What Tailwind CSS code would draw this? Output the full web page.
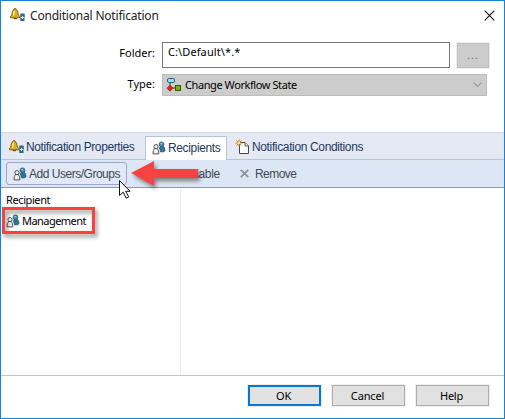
<!DOCTYPE html>
<html lang="en">
<head>
<meta charset="utf-8">
<title>Conditional Notification</title>
<script src="https://cdn.jsdelivr.net/npm/@tailwindcss/browser@4"></script>
</head>
<body class="bg-white">
<svg class="hidden">
  <defs>
    <symbol id="bell" viewBox="0 0 16 16">
      <path d="M5 1.500c.8 0 1.100.4 1.100 1.100C7.600 3.200 7.900 4.800 8.100 6.800c.1 1.200.8 1.900 1.500 2.700v1.300H.5V9.500C1.300 8.700 1.800 8 2 6.800c.2-1.900.5-3.600 1.900-4.200 0-.7.3-1.100 1.100-1.100z" fill="#dcae1e" stroke="#6e5413" stroke-width=".9"/>
      <path d="M4.300 3.800 3.500 8.500" stroke="#fff3a0" stroke-width="1.300"/>
      <path d="M3.800 11h3v1.200h-3z" fill="#6b4b12"/>
      <path d="M10.500 6.500h4v3.500h-4zM10.500 10v4h4" fill="#285a78"/>
      <path d="M10.500 7h4v7h-4z" fill="#346983"/>
      <path d="M11 10.500h3M12.500 9v3" stroke="#dce9ef" stroke-width="1"/>
    </symbol>
    <symbol id="users" viewBox="0 0 14 14">
      <path d="M7.300 6.500 8 5.500h3.500Q13 6 13 10q-1.500 1.300-4.500 1z" fill="#2e7799" stroke="#174864" stroke-width=".6"/>
      <circle cx="9.500" cy="3.300" r="2.400" fill="#4b94b8" stroke="#174864" stroke-width=".7"/>
      <path d="M8.600 2.600h1.200" stroke="#b7deef" stroke-width="1"/>
      <path d="M1 12.900Q.8 9 2.600 7.500h2.600Q7 9 6.900 12.900z" fill="#eee" stroke="#444" stroke-width=".9"/>
      <circle cx="4" cy="5.600" r="2.100" fill="#f3f3f3" stroke="#444" stroke-width=".9"/>
    </symbol>
  </defs>
</svg>
<div class="relative w-[505px] h-[419px] border border-[#1581d8] bg-white flex flex-col overflow-hidden font-['Noto_Sans',sans-serif] text-[11px] text-black whitespace-nowrap">

  <header class="h-[131px] shrink-0 flex flex-col">
    <div class="h-[41px] flex items-start justify-between pl-[9px] pr-[9px]">
      <div class="flex items-start">
        <svg class="size-4 mt-[6px]"><use href="#bell"/></svg>
        <h1 class="ml-1 mt-[5px] h-5 leading-5 text-[12px] tracking-[-0.200px] text-[#222]">Conditional Notification</h1>
      </div>
      <svg class="size-[11px] mt-[9px]" viewBox="0 0 11 11"><path d="M.7.700 10.300 10.300M10.300.700.700 10.300" stroke="#111" stroke-width="1.100"/></svg>
    </div>
    <div class="flex items-start h-[31px]">
      <label class="w-[154px] text-right leading-[22px]">Folder:</label>
      <div class="ml-[7px] w-[288px] h-[26px] border border-[#777] pl-[5px] leading-[18px] tracking-[0.100px]">C:\Default\*.*</div>
      <div class="ml-[7px] w-[32px] h-[25px] mt-px bg-[#ccc] border border-[#c0c0c0] outline outline-[#eee] text-center text-[#777] leading-[22px]"><span class="tracking-[1px]">...</span></div>
    </div>
    <div class="flex items-start">
      <label class="w-[154px] text-right leading-[22px]">Type:</label>
      <div class="ml-[7px] w-[325px] h-[22px] mt-px border border-[#bcbcbc] bg-[#ccc] flex items-center pl-[3px] pr-[4px]">
        <svg class="w-4 h-4" viewBox="0 0 16 16">
          <path d="M4 6v4M6 11h4" stroke="#333"/>
          <rect x="1.500" y="1.500" width="7" height="4" rx="1.300" fill="#9fdaf5" stroke="#1b5f83"/>
          <path d="M4 8.200 7 11.200 4 14.200 1 11.200z" fill="#e82015" stroke="#9c1710" stroke-width=".7"/>
          <rect x="9.500" y="8.500" width="5" height="5" fill="#77b000" stroke="#315b00"/>
        </svg>
        <span class="ml-[3px] grow tracking-[-0.420px]">Change Workflow State</span>
        <svg class="w-[9px] h-[6px]" viewBox="0 0 9 6"><path d="M.5.500 4.500 4.500 8.500.500" fill="none" stroke="#999" stroke-width="1.100"/></svg>
      </div>
    </div>
  </header>

  <nav class="h-[28px] shrink-0 bg-[#e4e9f4] border-t border-[#d4dae6] flex font-['Liberation_Sans',sans-serif] text-[12px] text-[#1e395b]">
    <div class="w-[144px] border-b border-[#b4c5dc] flex items-center pl-[8px] pt-[2px]">
      <svg class="size-4"><use href="#bell"/></svg><span class="ml-px tracking-[-0.390px]">Notification Properties</span>
    </div>
    <div class="w-[82px] mt-[3px] bg-white border-x border-t border-[#b4c5dc] flex items-center pl-[6px] pb-[2px]">
      <svg class="size-[14px]"><use href="#users"/></svg><span class="ml-[2px] tracking-[-0.360px]">Recipients</span>
    </div>
    <div class="grow border-b border-[#b4c5dc] flex items-center pl-[8px] pt-[2px]">
      <svg class="w-[15px] h-4" viewBox="0 0 15 16">
        <path d="M4.500 3.500H10L13.500 7v7.500h-9z" fill="#fff" stroke="#444"/><path d="M10 3.500V7h3.500" fill="#ddd" stroke="#444" stroke-width=".8"/>
        <path d="M4 .5v7M.5 4h7M1.500 1.500l5 5M6.500 1.500l-5 5" stroke="#d77e12" stroke-width="1"/><circle cx="4" cy="4" r="1.200" fill="#ffe477"/>
      </svg><span class="ml-[2px] tracking-[-0.360px]">Notification Conditions</span>
    </div>
  </nav>

  <div class="h-[28px] shrink-0 bg-[#dce6f4] border-b border-[#9299a3] flex items-center font-['Liberation_Sans',sans-serif] text-[12px] text-[#404955]">
    <div class="ml-[5px] w-[121px] h-[23px] border border-[#9ca6ce] rounded-[3px] bg-[#e3e8f6] flex items-center pl-[6px]">
      <svg class="size-[14px]"><use href="#users"/></svg><span class="ml-[2px] tracking-[-0.480px]">Add Users/Groups</span>
    </div>
    <span class="ml-[27px] w-[86px] pl-[2px] tracking-[-0.330px]">Add Variable</span>
    <svg class="size-[9px]" viewBox="0 0 9 9"><path d="m.8.800 7.400 7.400M8.200.800.800 8.200" stroke="#8d9299" stroke-width="1.800"/></svg>
    <span class="ml-[6px] tracking-[-0.550px]">Remove</span>
  </div>

  <main class="h-[187px] shrink-0 flex">
    <div class="w-[180px] border-r border-[#e6eefb] pt-[3px]">
      <div class="pl-[5px] h-[20px] leading-[18px] tracking-[-0.400px]">Recipient</div>
      <div class="pl-[5px] h-[20px] flex items-center">
        <svg class="size-[14px]"><use href="#users"/></svg><span class="ml-[2px] tracking-[-0.550px]">Management</span>
      </div>
    </div>
  </main>

  <footer class="grow border-t border-[#b8c5df] flex items-start justify-end gap-[11px] pt-[9px] pr-[15px] text-center leading-[19px]">
    <div class="w-[73px] h-[21px] border-2 border-[#0078d7] bg-[#e1e1e1] leading-[17px] outline outline-[#eee] pr-[2px] tracking-[-0.300px]">OK</div>
    <div class="w-[73px] h-[21px] border border-[#adadad] bg-[#e1e1e1] outline outline-[#eee] pr-[2px] tracking-[-0.150px]">Cancel</div>
    <div class="w-[73px] h-[21px] border border-[#adadad] bg-[#e1e1e1] outline outline-[#eee] pr-[2px] tracking-[-0.300px]">Help</div>
  </footer>

  <div class="absolute left-px top-[206px] w-[93px] h-[27px] border-3 border-[#f84242] drop-shadow-[2px_3px_2px_rgba(0,0,0,0.45)]"></div>
  <svg class="absolute left-[129px] top-[158px] w-[72px] h-[34px] drop-shadow-[2px_3px_2px_rgba(0,0,0,0.45)]" viewBox="130 159 72 34">
    <path d="M131 173 154 161v8h42q2 0 2 2v5q0 2-2 2h-42V186z" fill="#f84242"/>
  </svg>
  <svg class="absolute left-[117px] top-[178px] w-[14px] h-[21px]" viewBox="0 0 14 21">
    <path d="M1.500 1.500v15l3.700-3.300 3 6 2.500-1.300-3-5.600h4.300z" fill="#fff" stroke="#111"/>
  </svg>
</div>
</body>
</html>
